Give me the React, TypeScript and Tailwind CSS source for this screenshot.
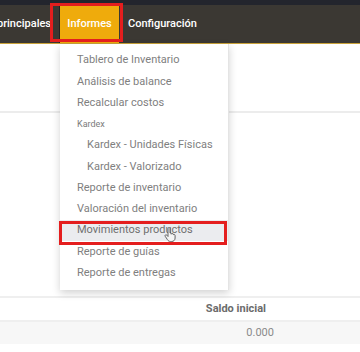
import React from "react";

const items: { label: string; kind?: "header" | "sub" | "active" }[] = [
  { label: "Tablero de Inventario" },
  { label: "Análisis de balance" },
  { label: "Recalcular costos" },
  { label: "Kardex", kind: "header" },
  { label: "Kardex - Unidades Físicas", kind: "sub" },
  { label: "Kardex - Valorizado", kind: "sub" },
  { label: "Reporte de inventario" },
  { label: "Valoración del inventario" },
  { label: "Movimientos productos", kind: "active" },
  { label: "Reporte de guías" },
  { label: "Reporte de entregas" },
];

function HandCursor() {
  return (
    <svg width="12" height="15" viewBox="0 0 12 15" className="absolute left-[164px] top-[227px]">
      <path
        d="M4 1.5c0-.6.4-1 1-1s1 .4 1 1V6l.3-.1c.6 0 1 .4 1 1v.3c.1-.5.5-.8 1-.8s1 .4 1 1v.6c.2-.3.5-.5.9-.5.5 0 .9.4.9 1V11c0 2-1.4 3.5-3.4 3.5H6.5C5 14.5 4.2 13.8 3.4 12.6L1.2 9.3c-.3-.5-.2-1.1.3-1.4.5-.3 1-.1 1.3.3L4 9.5z"
        fill="#f4f4f4"
        stroke="#555"
        strokeWidth="0.9"
      />
    </svg>
  );
}

export default function App() {
  return (
    <div className="relative w-[360px] h-[352px] overflow-hidden bg-white font-['Roboto',sans-serif]">
      <div className="h-[5px] bg-[#23252d]" />
      <nav className="h-[39px] bg-[#3b3833] border-b border-[#c9a23a] flex items-stretch text-[11px] font-medium text-white">
        <div className="w-[59px] flex items-center justify-end pr-[8px]">principales</div>
        <div className="w-[1px] bg-[#24221f]" />
        <div className="w-[59px] bg-[#efab0c] flex items-center justify-center">Informes</div>
        <div className="pl-[9px] flex items-center">Configuración</div>
      </nav>

      <main className="flex flex-col">
        <div className="h-[69px] border-b-2 border-[#ececec]" />
        <div className="h-[183px]" />
        <div className="h-[26px] border-t-2 border-b-2 border-[#efefef] flex items-center justify-end pr-[94px] text-[11px] font-bold text-[#6b6b6b]">
          Saldo inicial
        </div>
        <div className="h-[22px] bg-[#f7f7f7] flex items-center justify-end pr-[86px] text-[11px] text-[#8a8a8a]">
          0.000
        </div>
      </main>

      <div className="absolute left-[60px] top-[44px] w-[169px] bg-white py-[6px] shadow-[0_3px_8px_rgba(0,0,0,0.18)] border-r border-[#e4e4e4]">
        {items.map((it) => (
          <div
            key={it.label}
            className={
              it.kind === "header"
                ? "h-[21.25px] flex items-center pl-[17px] text-[9px] text-[#7c7c7c]"
                : it.kind === "sub"
                ? "h-[21.25px] flex items-center pl-[27px] text-[11px] text-[#808080]"
                : it.kind === "active"
                ? "h-[21.25px] flex items-center pl-[17px] text-[11px] text-[#707070] bg-[#ebecef]"
                : "h-[21.25px] flex items-center pl-[17px] text-[11px] text-[#808080]"
            }
          >
            {it.label}
          </div>
        ))}
      </div>

      <div className="absolute left-[50px] top-[3px] w-[73px] h-[39px] border-[3px] border-[#e41e1e]" />
      <div className="absolute left-[59px] top-[221px] w-[168px] h-[24px] border-[3px] border-[#e41e1e]" />
      <HandCursor />
    </div>
  );
}
